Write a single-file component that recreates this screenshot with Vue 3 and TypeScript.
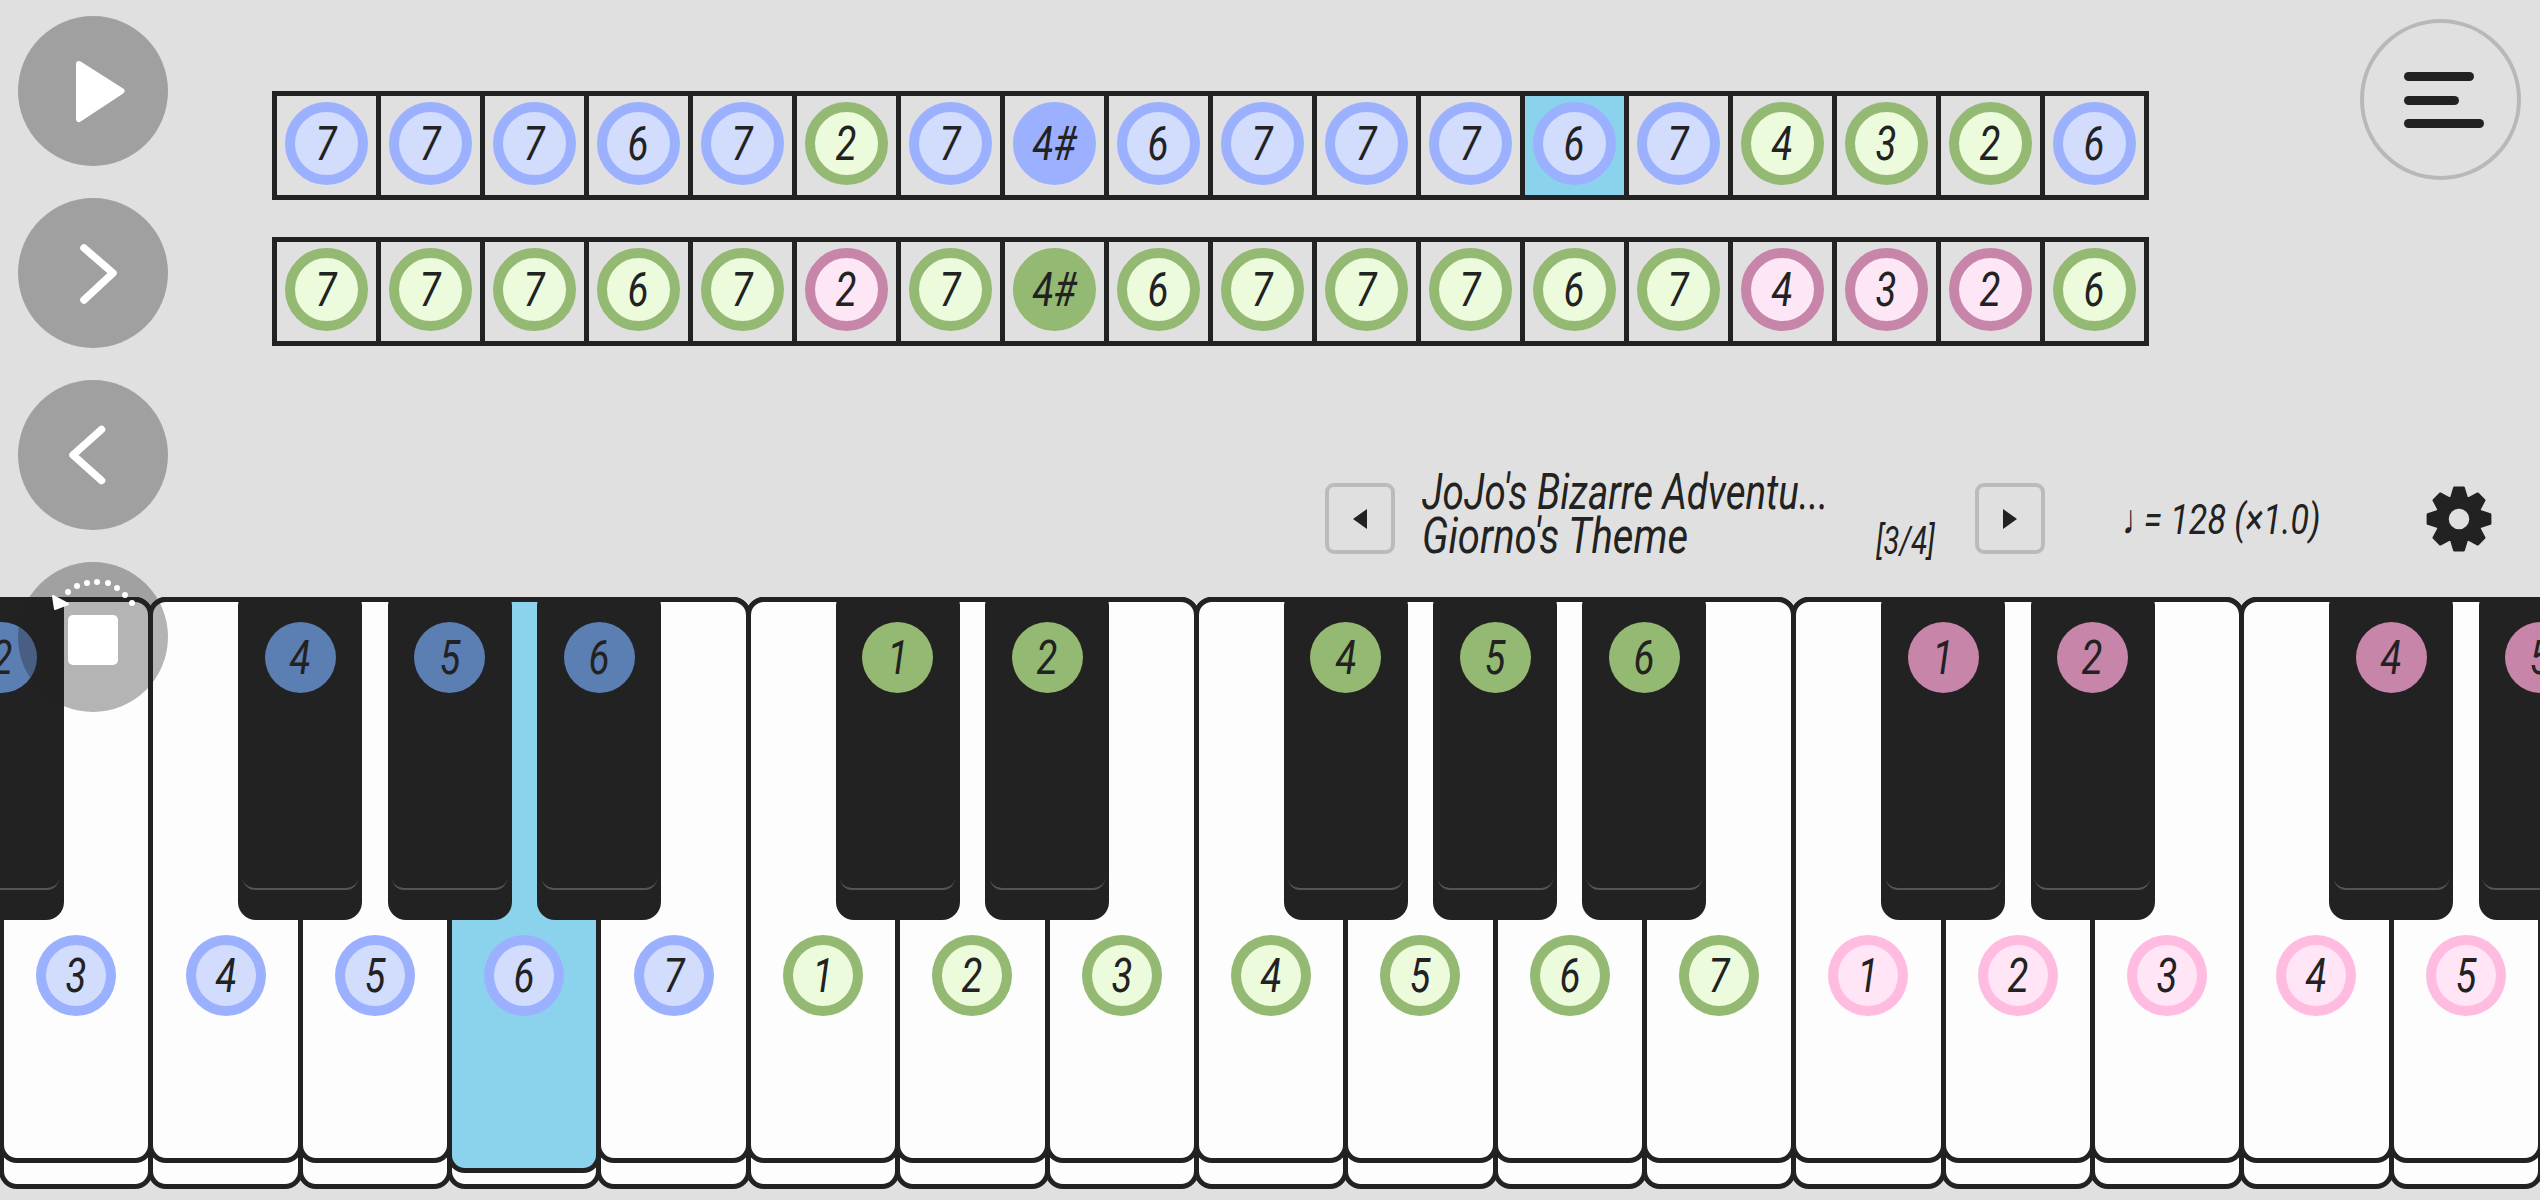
<script setup lang="ts">
type Tone = 'blue' | 'green' | 'pink' | 'rose'

interface Note {
  label: string
  tone: Tone
  solid?: boolean
  active?: boolean
}

const keyPitch = 149.35
const firstLine = 1.6

const blueRow: Note[] = [
  { label: '7', tone: 'blue' },
  { label: '7', tone: 'blue' },
  { label: '7', tone: 'blue' },
  { label: '6', tone: 'blue' },
  { label: '7', tone: 'blue' },
  { label: '2', tone: 'green' },
  { label: '7', tone: 'blue' },
  { label: '4#', tone: 'blue', solid: true },
  { label: '6', tone: 'blue' },
  { label: '7', tone: 'blue' },
  { label: '7', tone: 'blue' },
  { label: '7', tone: 'blue' },
  { label: '6', tone: 'blue', active: true },
  { label: '7', tone: 'blue' },
  { label: '4', tone: 'green' },
  { label: '3', tone: 'green' },
  { label: '2', tone: 'green' },
  { label: '6', tone: 'blue' }
]

const greenRow: Note[] = [
  { label: '7', tone: 'green' },
  { label: '7', tone: 'green' },
  { label: '7', tone: 'green' },
  { label: '6', tone: 'green' },
  { label: '7', tone: 'green' },
  { label: '2', tone: 'rose' },
  { label: '7', tone: 'green' },
  { label: '4#', tone: 'green', solid: true },
  { label: '6', tone: 'green' },
  { label: '7', tone: 'green' },
  { label: '7', tone: 'green' },
  { label: '7', tone: 'green' },
  { label: '6', tone: 'green' },
  { label: '7', tone: 'green' },
  { label: '4', tone: 'rose' },
  { label: '3', tone: 'rose' },
  { label: '2', tone: 'rose' },
  { label: '6', tone: 'green' }
]

const sheet = [blueRow, greenRow]

const whiteKeys: Note[] = [
  { label: '3', tone: 'blue' },
  { label: '4', tone: 'blue' },
  { label: '5', tone: 'blue' },
  { label: '6', tone: 'blue', active: true },
  { label: '7', tone: 'blue' },
  { label: '1', tone: 'green' },
  { label: '2', tone: 'green' },
  { label: '3', tone: 'green' },
  { label: '4', tone: 'green' },
  { label: '5', tone: 'green' },
  { label: '6', tone: 'green' },
  { label: '7', tone: 'green' },
  { label: '1', tone: 'pink' },
  { label: '2', tone: 'pink' },
  { label: '3', tone: 'pink' },
  { label: '4', tone: 'pink' },
  { label: '5', tone: 'pink' }
]

const blackKeys: { at: number; label: string; tone: Tone }[] = [
  { at: 0, label: '2', tone: 'blue' },
  { at: 2, label: '4', tone: 'blue' },
  { at: 3, label: '5', tone: 'blue' },
  { at: 4, label: '6', tone: 'blue' },
  { at: 6, label: '1', tone: 'green' },
  { at: 7, label: '2', tone: 'green' },
  { at: 9, label: '4', tone: 'green' },
  { at: 10, label: '5', tone: 'green' },
  { at: 11, label: '6', tone: 'green' },
  { at: 13, label: '1', tone: 'rose' },
  { at: 14, label: '2', tone: 'rose' },
  { at: 16, label: '4', tone: 'rose' },
  { at: 17, label: '5', tone: 'rose' }
]

const blackLeft = (at: number) => `${firstLine + keyPitch * at - 62}px`

const arcDots = [
  [68, 592], [77, 586], [87, 583], [97, 582],
  [108, 583], [117, 588], [125, 595], [132, 603]
]

// eight trapezoid teeth round a centre of 34,34, with a round hole
const polar = (r: number, deg: number) => {
  const a = (deg * Math.PI) / 180
  return `${(34 + r * Math.sin(a)).toFixed(2)} ${(34 - r * Math.cos(a)).toFixed(2)}`
}

const gearPath = (() => {
  const pts: string[] = []
  for (let t = 0; t < 8; t++) {
    const c = t * 45
    pts.push(polar(22.5, c - 20), polar(31.5, c - 8.5), polar(31.5, c + 8.5), polar(22.5, c + 20))
  }
  const hole = 'M45.5 34a11.5 11.5 0 1 0 -23 0a11.5 11.5 0 1 0 23 0z'
  return `M${pts.join('L')}z${hole}`
})()
</script>

<template>
  <div class="page">
    <div class="side">
      <button class="round">
        <svg viewBox="0 0 150 150" width="150" height="150">
          <polygon points="61,48 103.500,75 61,103" fill="#fff" stroke="#fff" stroke-width="6" stroke-linejoin="round" />
        </svg>
      </button>
      <button class="round">
        <svg viewBox="0 0 150 150" width="150" height="150">
          <polyline points="66,50 95,75 66,102" fill="none" stroke="#fff" stroke-width="7.500" stroke-linecap="round" stroke-linejoin="round" />
        </svg>
      </button>
      <button class="round">
        <svg viewBox="0 0 150 150" width="150" height="150">
          <polyline points="83.500,49.500 55,75 83.500,100.500" fill="none" stroke="#fff" stroke-width="7.500" stroke-linecap="round" stroke-linejoin="round" />
        </svg>
      </button>
      <button class="round stop">
        <svg viewBox="18 562 150 150" width="150" height="150">
          <circle v-for="(d, i) in arcDots" :key="i" :cx="d[0]" :cy="d[1]" r="3" fill="#fff" />
          <polygon points="53,596 68,604 55,609" fill="#fff" stroke="#fff" stroke-width="2" stroke-linejoin="round" />
          <rect x="68" y="615" width="50" height="50" rx="5" fill="#fff" />
        </svg>
      </button>
    </div>

    <header class="top">
      <div class="sheet">
        <div v-for="(row, r) in sheet" :key="r" class="sheet-row">
          <div v-for="(n, i) in row" :key="i" class="cell" :class="{ current: n.active }">
            <span class="note" :class="[n.tone, { solid: n.solid }]"><i>{{ n.label }}</i></span>
          </div>
        </div>
      </div>
      <button class="menu">
        <span class="bar long"></span>
        <span class="bar short"></span>
        <span class="bar full"></span>
      </button>
    </header>

    <section class="controls">
      <button class="step">
        <svg viewBox="0 0 14 20" width="14" height="20"><polygon points="14,0 14,20 0,10" fill="#222" /></svg>
      </button>
      <div class="song">
        <div class="title first"><i>JoJo's Bizarre Adventu...</i></div>
        <div class="title second"><i>Giorno's Theme</i></div>
      </div>
      <div class="count"><i>[3/4]</i></div>
      <button class="step">
        <svg viewBox="0 0 14 20" width="14" height="20"><polygon points="0,0 0,20 14,10" fill="#222" /></svg>
      </button>
      <div class="tempo"><i><span class="crotchet">♩</span>= 128 (×1.0)</i></div>
      <svg class="gear" viewBox="0 0 68 68" width="68" height="68">
        <path :d="gearPath" fill="#222" fill-rule="evenodd" stroke="#222" stroke-width="2.500" stroke-linejoin="round" />
      </svg>
    </section>

    <section class="piano">
      <div class="whites">
        <div v-for="(k, i) in whiteKeys" :key="i" class="key">
          <div class="face" :class="{ pressed: k.active }">
            <span class="note" :class="k.tone"><i>{{ k.label }}</i></span>
          </div>
        </div>
      </div>
      <div v-for="b in blackKeys" :key="b.at" class="black" :style="{ left: blackLeft(b.at) }">
        <span class="note solid" :class="b.tone"><i>{{ b.label }}</i></span>
        <span class="black-lip"></span>
      </div>
    </section>
  </div>
</template>

<style>
html,
body {
  margin: 0;
  background: #e0e0e0;
}
</style>

<style scoped>
.page {
  position: relative;
  width: 2540px;
  height: 1200px;
  overflow: hidden;
  background: #e0e0e0;
  color: #222;
  font-family: Roboto, "Liberation Sans", sans-serif;
}

button {
  padding: 0;
  background: none;
  font: inherit;
}

i {
  display: inline-block;
  font-style: italic;
  white-space: nowrap;
}

/* round transport buttons sit over the page and the keys */
.side {
  position: absolute;
  z-index: 5;
  top: 16px;
  left: 18px;
  display: flex;
  flex-direction: column;
  gap: 32px;
}

.round {
  width: 150px;
  height: 150px;
  border: 0;
  border-radius: 50%;
  background: #a0a0a0;
}

.round svg {
  display: block;
}

.round.stop {
  background: rgba(34, 34, 34, 0.33);
}

.top {
  display: flex;
  align-items: flex-start;
  justify-content: space-between;
  padding: 19px 19px 0 272px;
  height: 181px;
}

.sheet {
  display: flex;
  flex-direction: column;
  gap: 37px;
  padding-top: 72px;
}

.sheet-row {
  display: flex;
}

.cell {
  box-sizing: border-box;
  display: flex;
  justify-content: center;
  width: 109px;
  height: 109px;
  margin-right: -5px;
  padding-top: 6px;
  border: 5px solid #222;
}

.cell.current {
  background: #8bd3ec;
}

.note {
  box-sizing: border-box;
  display: flex;
  align-items: center;
  justify-content: center;
  width: 83px;
  height: 83px;
  border: 10px solid;
  border-radius: 50%;
  font-size: 48px;
}

.note i {
  transform: scaleX(0.8);
}

.note.blue {
  border-color: #9bb1ff;
  background: #d2dcfd;
}

.note.green {
  border-color: #93b972;
  background: #edfbdd;
}

.note.rose {
  border-color: #c785a9;
  background: #fde6f5;
}

.note.pink {
  border-color: #ffbbe0;
  background: #ffe5f5;
}

.note.solid.blue {
  background: #9bb1ff;
}

.note.solid.green {
  background: #93b972;
}

.menu {
  box-sizing: border-box;
  display: flex;
  flex-direction: column;
  gap: 14.5px;
  align-items: flex-start;
  width: 161px;
  height: 161px;
  padding: 49px 0 0 40px;
  border: 4px solid #b8b8b8;
  border-radius: 50%;
}

.bar {
  display: block;
  height: 9px;
  border-radius: 5px;
  background: #222;
}

.bar.long {
  width: 70px;
}

.bar.short {
  width: 55px;
}

.bar.full {
  width: 80px;
}

.controls {
  box-sizing: border-box;
  display: flex;
  align-items: flex-start;
  height: 397px;
  padding: 283px 0 0 1325px;
}

.step {
  box-sizing: border-box;
  display: flex;
  align-items: center;
  justify-content: center;
  width: 70px;
  height: 71px;
  border: 4px solid #bbb;
  border-radius: 9px;
}

.song {
  width: 454px;
  margin-left: 27px;
  margin-top: -13px;
}

.title {
  height: 44px;
  font-size: 50px;
  line-height: 44px;
}

.title i {
  transform-origin: left center;
}

.title.first i {
  transform: scaleX(0.77);
}

.title.second i {
  transform: scaleX(0.8);
}

.count {
  width: 99px;
  margin-top: 36px;
  font-size: 38px;
  line-height: 44px;
}

.count i {
  transform: scaleX(0.77);
  transform-origin: left center;
}

.tempo {
  width: 303px;
  margin-left: 77px;
  margin-top: 12px;
  font-size: 42px;
  line-height: 50px;
}

.tempo i {
  transform: scaleX(0.81);
  transform-origin: left center;
}

.crotchet {
  display: inline-block;
  margin-right: -15px;
}

.gear {
  margin-top: 1.5px;
}

.piano {
  position: relative;
  height: 592px;
}

.whites {
  display: flex;
  margin-left: -0.9px;
}

.key {
  box-sizing: border-box;
  flex: 0 0 154.35px;
  height: 592px;
  margin-right: -5px;
  border: 5px solid #222;
  border-radius: 18px;
  background: #fdfdfd;
}

.face {
  box-sizing: border-box;
  display: flex;
  justify-content: center;
  height: 566px;
  margin: -5px;
  padding-top: 333px;
  border: 5px solid #222;
  border-radius: 18px;
  background: #fdfdfd;
}

.face.pressed {
  height: 576px;
  background: #8bd3ec;
}

.face .note {
  width: 80px;
  height: 81px;
}

.black {
  position: absolute;
  top: 0;
  display: flex;
  flex-direction: column;
  align-items: center;
  box-sizing: border-box;
  width: 124px;
  height: 323px;
  padding-top: 25px;
  border-radius: 8px 8px 18px 18px;
  background: #222;
}

.black .note {
  width: 71px;
  height: 71px;
  border: 0;
}

.black .note.solid.blue {
  background: #5b7eb3;
}

.black .note.solid.rose {
  background: #c785a9;
}

.black-lip {
  display: block;
  box-sizing: border-box;
  width: 115px;
  height: 12px;
  margin-top: 185px;
  border-bottom: 2px solid #555;
  border-radius: 0 0 12px 12px;
}
</style>
